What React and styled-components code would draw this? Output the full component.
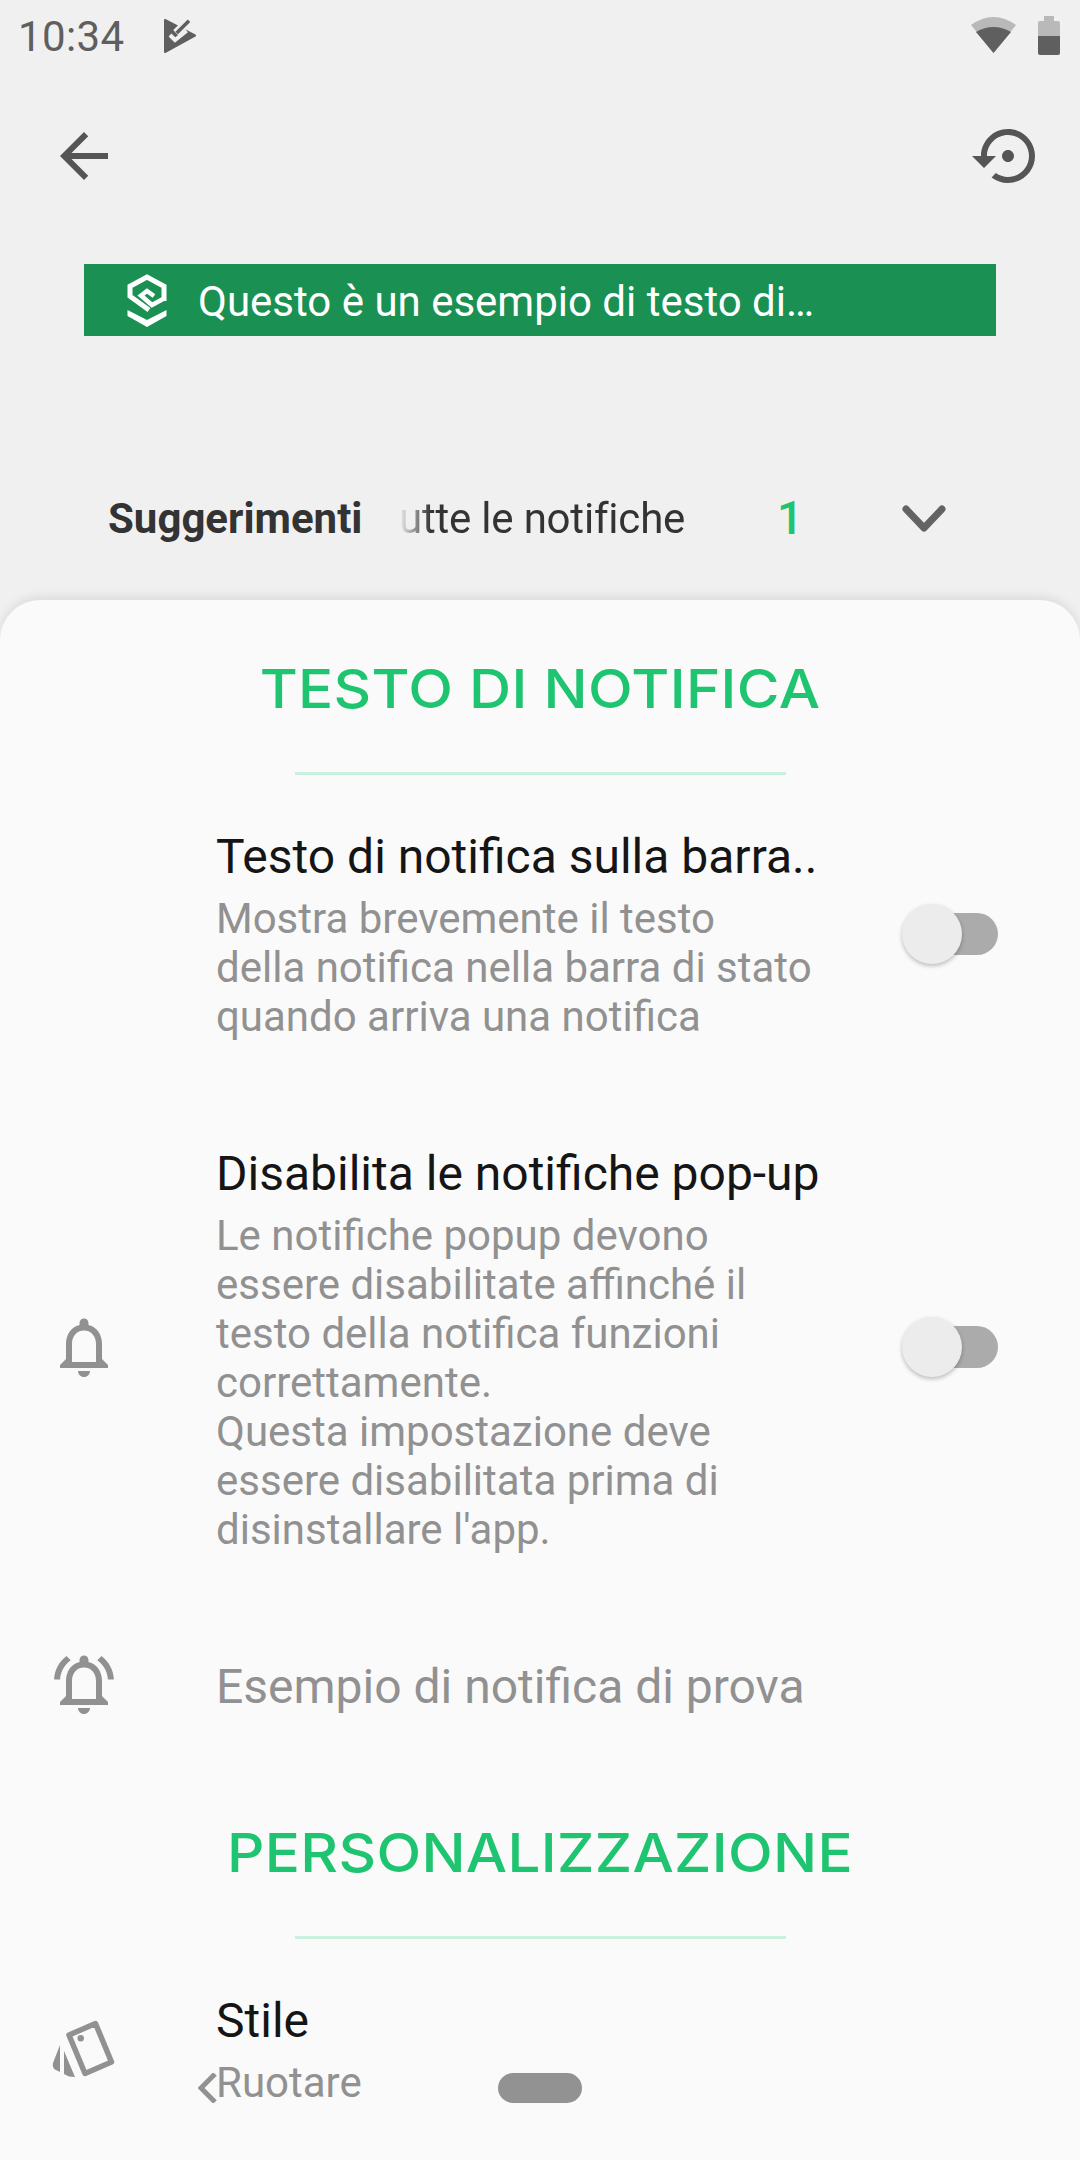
import React from 'react';
import styled, { createGlobalStyle } from 'styled-components';

const GlobalStyle = createGlobalStyle`
html, body { margin: 0; padding: 0; background: #f0f0f0; }
body { font-family: Roboto, "Liberation Sans", sans-serif; }
* { box-sizing: border-box; }
`;

const Page = styled.div`
position: relative;
width: 1080px;
height: 2160px;
overflow: hidden;
background: #f0f0f0;
`;

const StatusBar = styled.div`
display: flex;
align-items: flex-start;
height: 120px;
padding: 16px 20px 0 18px;
color: #5f5f5f;
`;

const Clock = styled.div`
font-size: 42px;
line-height: 42px;
letter-spacing: 0.4px;
width: 146px;
`;

const StatusRight = styled.div`
margin-left: auto;
display: flex;
align-items: flex-start;
gap: 22px;
`;

const Toolbar = styled.div`
display: flex;
justify-content: space-between;
height: 72px;
padding: 0 36px 0 48px;
svg { display: block; }
`;

const Banner = styled.div`
display: flex;
align-items: center;
width: 912px;
height: 72px;
margin: 72px 0 0 84px;
padding-left: 43px;
gap: 31px;
background: #1a9152;
color: #fff;
font-size: 42px;
`;

const BannerText = styled.span`
position: relative;
top: 1px;
`;

const Tabs = styled.div`
display: flex;
align-items: center;
height: 60px;
margin-top: 152px;
padding-left: 108px;
color: #333;
font-size: 42px;
`;

const ActiveTab = styled.div`
font-weight: 700;
width: 291px;
`;

const FadedTab = styled.div`
width: 378px;
color: #333;
letter-spacing: -0.2px;
mask-image: linear-gradient(to right, transparent 0, #000 32px);
`;

const Count = styled.div`
width: 125px;
color: #1fc470;
font-weight: 500;
font-size: 46px;
`;

const Sheet = styled.div`
margin-top: 52px;
height: 1560px;
background: #fafafa;
border-radius: 40px 40px 0 0;
box-shadow: 0 -4px 10px rgba(0, 0, 0, 0.08);
padding-top: 56px;
`;

const SectionTitle = styled.div`
margin-top: ${p => p.$gap || 0}px;
text-align: center;
color: #1fc470;
font-family: Inter, sans-serif;
font-weight: 500;
font-size: 54px;
line-height: 66px;
letter-spacing: 0.3px;
transform: scaleX(1.08);
`;

const Divider = styled.div`
width: 491px;
height: 3px;
margin: 50px auto 0;
background: #c9f0df;
`;

const Row = styled.div`
display: flex;
align-items: center;
margin-top: ${p => p.$gap}px;
`;

const IconCell = styled.div`
width: 216px;
flex: none;
padding-left: ${p => p.$pad || 48}px;
svg { display: block; }
`;

const TextCell = styled.div`
width: 686px;
flex: none;
padding-top: ${p => p.$top || 0}px;
`;

const Title = styled.div`
font-size: 48px;
line-height: 62px;
color: #151515;
white-space: nowrap;
`;

const Sub = styled.div`
margin-top: 6px;
font-size: 42px;
line-height: 49px;
color: #919191;
white-space: nowrap;
`;

const PlainLabel = styled.div`
padding-top: 5px;
font-size: 48px;
line-height: 62px;
color: #919191;
`;

const Switch = styled.div`
position: relative;
width: 96px;
height: 60px;
flex: none;
&::before {
  content: '';
  position: absolute;
  top: 9px;
  right: 0;
  width: 70px;
  height: 42px;
  border-radius: 21px;
  background: #ababab;
}
&::after {
  content: '';
  position: absolute;
  top: 0;
  left: 0;
  width: 60px;
  height: 60px;
  border-radius: 50%;
  background: #ececec;
  box-shadow: 0 2px 4px rgba(0, 0, 0, 0.25);
}
`;

const NavOverlay = styled.div`
position: absolute;
left: 198px;
top: 2073px;
display: flex;
gap: 280px;
svg { display: block; }
`;

const NavPill = styled.div`
width: 84px;
height: 30px;
border-radius: 15px;
background: #929292;
`;

const BELL = 'M12 22c1.1 0 2-.9 2-2h-4c0 1.1.9 2 2 2zm6-6v-5c0-3.07-1.63-5.64-4.5-6.32V4c0-.83-.67-1.5-1.5-1.5s-1.5.67-1.5 1.5v.68C7.64 5.36 6 7.92 6 11v5l-2 2v1h16v-1l-2-2zm-2 1H8v-6c0-2.48 1.51-4.5 4-4.5s4 2.02 4 4.5v6z';
const WAVES = 'M7.58 4.08L6.15 2.65C3.75 4.48 2.17 7.3 2.03 10.5h2c.15-2.65 1.51-4.97 3.55-6.42zm12.39 6.42h2c-.15-3.2-1.73-6.02-4.12-7.85l-1.42 1.43c2.02 1.45 3.39 3.77 3.54 6.42z';

const Bell = ({ active }) => (
    <svg width="72" height="72" viewBox="0 0 24 24" fill="#919191">
        <path d={BELL} />
        {active && <path d={WAVES} />}
    </svg>
);

const PlayCheck = () => (
    <svg width="32" height="34" viewBox="0 0 32 34" style={{ marginTop: 3 }}>
        <path d="M1 1 L31 16.5 L1 33 Z" fill="#5f5f5f" stroke="#5f5f5f" strokeWidth="2" strokeLinejoin="round" />
        <path d="M6 16 L11 21 L22.7 11.7" fill="none" stroke="#f0f0f0" strokeWidth="4" />
        <path d="M26 0.5 L12 14" fill="none" stroke="#f0f0f0" strokeWidth="8" />
        <path d="M25 1.7 L12.7 14" fill="none" stroke="#5f5f5f" strokeWidth="3.5" />
    </svg>
);

const Wifi = () => (
    <svg width="45" height="36" viewBox="0 0 45 36" style={{ marginTop: 1 }}>
        <path d="M0 8 Q22.5 -8 45 8 L22.5 36 Z" fill="#b9b9b9" />
        <path d="M5 15 Q22.5 5 40 15 L22.5 36 Z" fill="#5f5f5f" />
    </svg>
);

const Battery = () => (
    <svg width="22" height="39" viewBox="0 0 22 39">
        <path d="M6 0h10v5h4a2 2 0 0 1 2 2v13H0V7a2 2 0 0 1 2-2h4z" fill="#b9b9b9" />
        <path d="M0 20h22v17a2 2 0 0 1-2 2H2a2 2 0 0 1-2-2z" fill="#5f5f5f" />
    </svg>
);

const Logo = () => (
    <svg width="40" height="53" viewBox="0 0 40 53" fill="none" stroke="#fff" strokeWidth="5">
        <path d="M37 27V12.3L20 3 3 12.3v10L22 36" />
        <path d="M27 22L20 17l-6 4.5L25 31l12-6.5" strokeWidth="4.5" />
        <path d="M0.5 36 L20 46 L39.5 36 V42 L20 53 L0.5 42 Z" fill="#fff" stroke="none" />
    </svg>
);

const Chevron = () => (
    <svg width="44" height="27" viewBox="0 0 44 27" fill="none" stroke="#636363" strokeWidth="7" strokeLinecap="round" strokeLinejoin="round">
        <path d="M4 4 L22 23 L40 4" />
    </svg>
);

const CardsIcon = () => (
    <svg width="63" height="57" viewBox="0 0 63 57" fill="#919191">
        <path d="M17 15 L43.5 3.5 L59.5 42 L33 53.5 Z" fill="none" stroke="#919191" strokeWidth="5.5" strokeLinejoin="round" />
        <circle cx="28.7" cy="18.3" r="3.2" />
        <path d="M12 31 L23 57 L17 56.5 L12 54 Z" />
        <path d="M8 25 V52 L3 49.5 Q0 47 1 43 Z" />
    </svg>
);

const App = () => {
    return (
        <Page>
            <GlobalStyle />
            <StatusBar>
                <Clock>10:34</Clock>
                <PlayCheck />
                <StatusRight>
                    <Wifi />
                    <Battery />
                </StatusRight>
            </StatusBar>
            <Toolbar>
                <svg width="72" height="72" viewBox="0 0 24 24" fill="#555">
                    <path d="M20 11H7.83l5.59-5.59L12 4l-8 8 8 8 1.41-1.41L7.83 13H20v-2z" />
                </svg>
                <svg width="72" height="72" viewBox="0 0 24 24" fill="#555">
                    <path d="M14 12c0-1.1-.9-2-2-2s-2 .9-2 2 .9 2 2 2 2-.9 2-2zm-2-9c-4.97 0-9 4.03-9 9H0l4 4 4-4H5c0-3.87 3.13-7 7-7s7 3.13 7 7-3.13 7-7 7c-1.51 0-2.91-.49-4.06-1.3l-1.42 1.44C8.04 20.3 9.94 21 12 21c4.97 0 9-4.03 9-9s-4.03-9-9-9z" />
                </svg>
            </Toolbar>
            <Banner>
                <Logo />
                <BannerText>Questo è un esempio di testo di…</BannerText>
            </Banner>
            <Tabs>
                <ActiveTab>Suggerimenti</ActiveTab>
                <FadedTab>utte le notifiche</FadedTab>
                <Count>1</Count>
                <Chevron />
            </Tabs>
            <Sheet>
                <SectionTitle>TESTO DI NOTIFICA</SectionTitle>
                <Divider />
                <Row $gap={51}>
                    <IconCell />
                    <TextCell>
                        <Title>Testo di notifica sulla barra..</Title>
                        <Sub>Mostra brevemente il testo<br />della notifica nella barra di stato<br />quando arriva una notifica</Sub>
                    </TextCell>
                    <Switch />
                </Row>
                <Row $gap={98}>
                    <IconCell><Bell /></IconCell>
                    <TextCell $top={4}>
                        <Title>Disabilita le notifiche pop-up</Title>
                        <Sub>Le notifiche popup devono<br />essere disabilitate affinché il<br />testo della notifica funzioni<br />correttamente.<br />Questa impostazione deve<br />essere disabilitata prima di<br />disinstallare l'app.</Sub>
                    </TextCell>
                    <Switch />
                </Row>
                <Row $gap={94}>
                    <IconCell><Bell active /></IconCell>
                    <PlainLabel>Esempio di notifica di prova</PlainLabel>
                </Row>
                <SectionTitle $gap={100}>PERSONALIZZAZIONE</SectionTitle>
                <Divider />
                <Row $gap={51}>
                    <IconCell $pad={52}><CardsIcon /></IconCell>
                    <TextCell>
                        <Title>Stile</Title>
                        <Sub>Ruotare</Sub>
                    </TextCell>
                </Row>
            </Sheet>
            <NavOverlay>
                <svg width="20" height="30" viewBox="0 0 20 30" fill="none" stroke="#929292" strokeWidth="5">
                    <path d="M17 1 L3 15 L17 29" />
                </svg>
                <NavPill />
            </NavOverlay>
        </Page>
    );
};

export default App;
